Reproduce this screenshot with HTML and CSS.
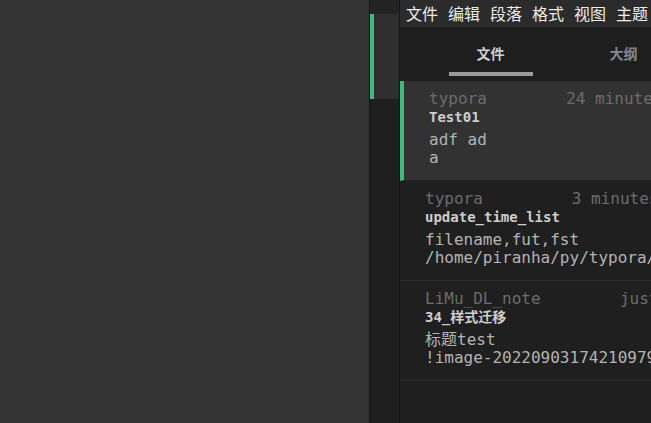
FILE: index.html
```html
<!DOCTYPE html>
<html lang="zh">
<head>
<meta charset="utf-8">
<title>Typora</title>
<link rel="stylesheet" href="styles.css">
</head>
<body>
<div class="editor"></div>
<div class="divider"></div>
<div class="gutter">
  <div class="gutter-top"></div>
  <div class="gutter-active"></div>
  <div class="gutter-rest"></div>
</div>
<div class="divider"></div>
<aside class="sidebar">
  <nav class="menubar">
    <span class="menu-item">文件</span>
    <span class="menu-item">编辑</span>
    <span class="menu-item">段落</span>
    <span class="menu-item">格式</span>
    <span class="menu-item">视图</span>
    <span class="menu-item">主题</span>
  </nav>
  <div class="tabs">
    <div class="tab tab-active"><span class="tab-label">文件</span><span class="tab-bar"></span></div>
    <div class="tab"><span class="tab-label">大纲</span></div>
  </div>
  <ul class="file-list">
    <li class="item item-active">
      <div class="meta"><span>typora</span><span>24 minutes ago</span></div>
      <div class="title">Test01</div>
      <div class="excerpt">adf ad<br>a</div>
    </li>
    <li class="item">
      <div class="meta"><span>typora</span><span>3 minutes ago</span></div>
      <div class="title">update_time_list</div>
      <div class="excerpt">filename,fut,fst<br>/home/piranha/py/typora/</div>
    </li>
    <li class="item">
      <div class="meta"><span>LiMu_DL_note</span><span>just now</span></div>
      <div class="title">34_样式迁移</div>
      <div class="excerpt">标题test<br>!image-20220903174210979</div>
    </li>
  </ul>
</aside>
</body>
</html>
```

FILE: styles.css
```css
html, body {
  margin: 0;
  padding: 0;
  height: 100%;
}
body {
  display: flex;
  width: 651px;
  height: 423px;
  overflow: hidden;
  background: #333333;
  font-family: "DejaVu Sans Mono", "Noto Sans CJK SC", monospace;
}
.editor {
  flex: 0 0 369px;
  background: #333333;
}
.divider {
  flex: 0 0 1px;
  background: #161616;
}
.gutter {
  flex: 0 0 29px;
  display: flex;
  flex-direction: column;
}
.gutter-top {
  height: 14px;
  background: #232323;
}
.gutter-active {
  height: 85px;
  border-left: 4px solid #3fb97e;
  background: #2f2f2f;
}
.gutter-rest {
  flex: 1;
  background: #1e1e1e;
}
.sidebar {
  flex: 0 0 310px;
  display: flex;
  flex-direction: column;
  background: #1f1f1f;
}
.menubar {
  height: 27px;
  display: flex;
  align-items: center;
  padding-left: 6px;
  gap: 10px;
  background: #2b2b2b;
  font-family: "Noto Sans CJK SC", sans-serif;
  font-size: 16px;
  line-height: 27px;
  color: #ececec;
  white-space: nowrap;
}
.menu-item {
  flex: none;
}
.tabs {
  height: 54px;
  display: flex;
  padding-left: 24px;
  background: #1e1e1e;
}
.tab {
  flex: 0 0 133px;
  display: flex;
  flex-direction: column;
  align-items: center;
  padding-top: 16px;
  box-sizing: border-box;
}
.tab-label {
  font-family: "Noto Sans CJK SC", sans-serif;
  font-size: 14px;
  line-height: 20px;
  font-weight: bold;
  color: #7f8894;
}
.tab-active .tab-label {
  color: #cfcfcf;
}
.tab-bar {
  margin-top: 9px;
  width: 84px;
  height: 4px;
  background: #9a9a9a;
}
.file-list {
  list-style: none;
  margin: 0;
  padding: 0;
}
.item {
  height: 100px;
  box-sizing: border-box;
  padding: 8px 13px 0 25px;
  border-bottom: 1px solid #2c2c2c;
  background: #1f1f1f;
  white-space: nowrap;
}
.item-active {
  background: #323232;
  border-left: 4px solid #3fb97e;
  border-bottom-color: #262626;
  padding-right: 9px;
}
.meta {
  display: flex;
  justify-content: space-between;
  font-size: 16px;
  line-height: 20px;
  color: #6c6c6c;
}
.title {
  font-size: 14px;
  line-height: 16px;
  font-weight: bold;
  color: #cdcdcd;
}
.excerpt {
  margin-top: 6px;
  font-size: 16px;
  line-height: 18px;
  color: #b3b3b3;
}
```
